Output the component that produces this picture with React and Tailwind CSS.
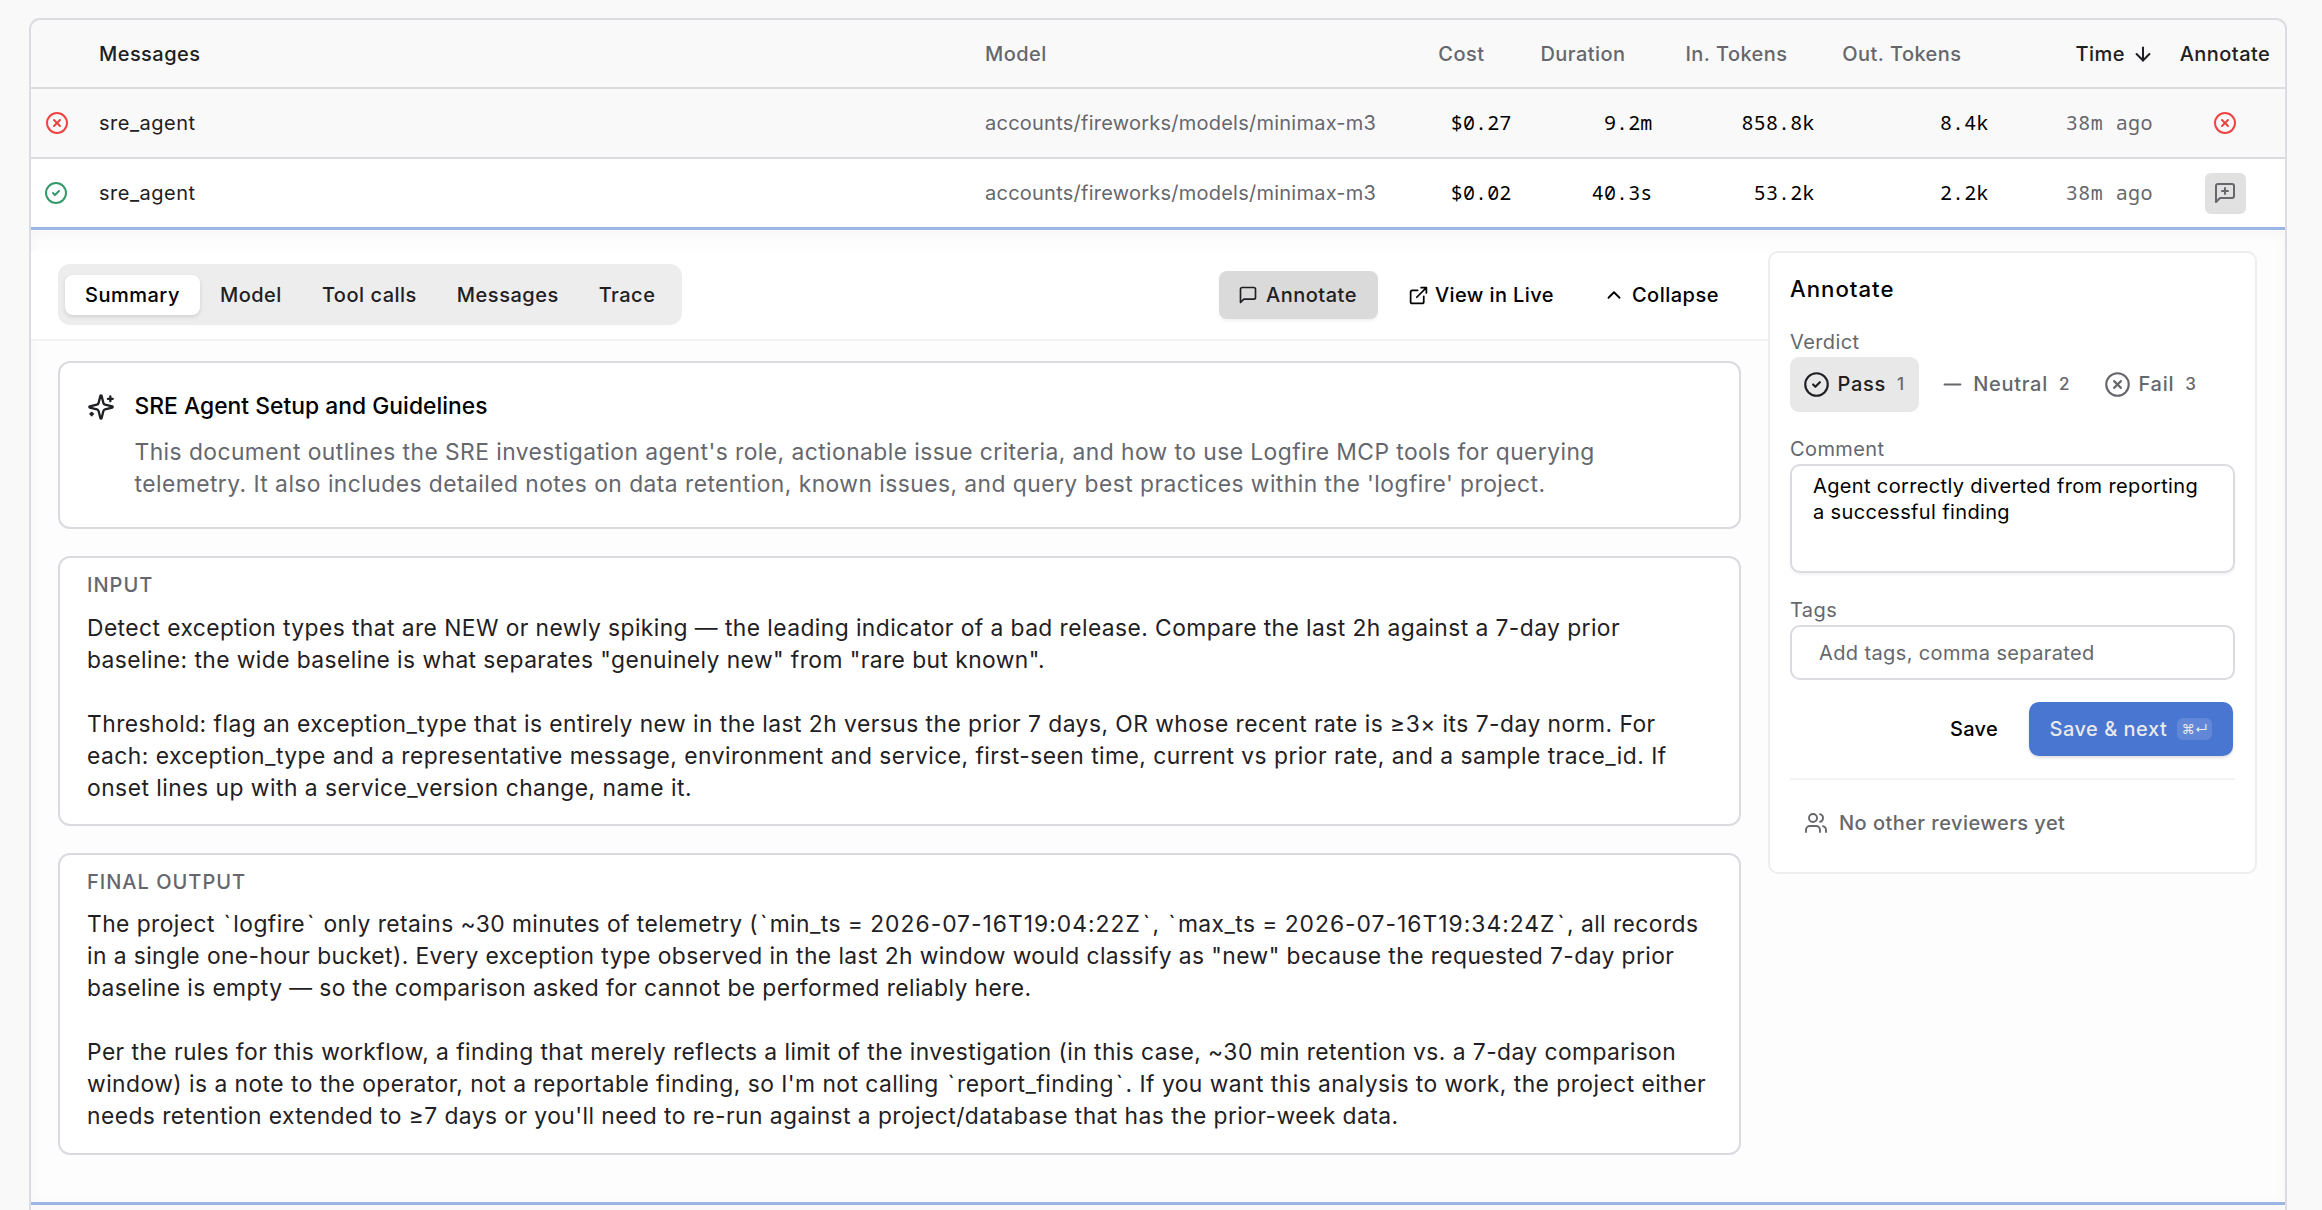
import { ArrowDown, ChevronUp, CircleCheck, CircleX, Minus } from 'lucide-react'

const rows = [
  { name: 'sre_agent', status: 'error', model: 'accounts/fireworks/models/minimax-m3', cost: '$0.27', duration: '9.2m', input: '858.8k', output: '8.4k', time: '38m ago', verdict: 'fail' },
  { name: 'sre_agent', status: 'ok', model: 'accounts/fireworks/models/minimax-m3', cost: '$0.02', duration: '40.3s', input: '53.2k', output: '2.2k', time: '38m ago', verdict: null },
]

const tabs = ['Summary', 'Model', 'Tool calls', 'Messages', 'Trace']

// each line carries its own tracking
const inputLines = [
  ['Detect exception types that are NEW or newly spiking — the leading indicator of a bad release. Compare the last 2h against a 7-day prior', 'tracking-[0.43px]'],
  ['baseline: the wide baseline is what separates "genuinely new" from "rare but known".', 'tracking-[0.43px]'],
  ['', ''],
  ['Threshold: flag an exception_type that is entirely new in the last 2h versus the prior 7 days, OR whose recent rate is ≥3× its 7-day norm. For', 'tracking-[0.47px]'],
  ['each: exception_type and a representative message, environment and service, first-seen time, current vs prior rate, and a sample trace_id. If', 'tracking-[0.475px]'],
  ['onset lines up with a service_version change, name it.', 'tracking-[0.49px]'],
]

const outputLines = [
  ['The project `logfire` only retains ~30 minutes of telemetry (`min_ts = 2026-07-16T19:04:22Z`, `max_ts = 2026-07-16T19:34:24Z`, all records', 'tracking-[0.44px]'],
  ['in a single one-hour bucket). Every exception type observed in the last 2h window would classify as "new" because the requested 7-day prior', 'tracking-[0.42px]'],
  ['baseline is empty — so the comparison asked for cannot be performed reliably here.', 'tracking-[0.41px]'],
  ['', ''],
  ['Per the rules for this workflow, a finding that merely reflects a limit of the investigation (in this case, ~30 min retention vs. a 7-day comparison', 'tracking-[0.44px]'],
  ["window) is a note to the operator, not a reportable finding, so I'm not calling `report_finding`. If you want this analysis to work, the project either", 'tracking-[0.47px]'],
  ["needs retention extended to ≥7 days or you'll need to re-run against a project/database that has the prior-week data.", 'tracking-[0.45px]'],
]

const gridCols = 'grid grid-cols-[68px_886px_398.5px_128px_141px_162px_174px_164.5px_132px] items-center'
const mono = "pb-px text-right font-['Noto_Sans_Mono','DejaVu_Sans_Mono',monospace]"

export default function App() {
  return (
    <div className="h-[1210px] overflow-hidden bg-[#f9f9f9] pt-[18px] pl-[29px] font-['Inter',sans-serif] text-[20px] leading-[28px] text-[#1f2023]">
      <div className="h-[1300px] w-[2258px] overflow-hidden rounded-t-[11px] border-2 border-[#dcdce1]">
        <HeaderRow />
        {rows.map((r, i) => <MessageRow key={i} row={r} open={i === 1} />)}
        <div className="flex h-[972px] items-start border-y border-white bg-[#fdfdfd] pt-5 inset-shadow-[0_3px_12px_rgba(0,0,0,0.035)]">
          <main className="w-[1737px]">
            <Toolbar />
            <div className="flex flex-col gap-[27px] px-[27px] py-5">
              <SummaryCard />
              <TextCard label="INPUT" lines={inputLines} className="h-[270px] gap-[13px]" />
              <TextCard label="FINAL OUTPUT" lines={outputLines} className="h-[302px] gap-3" />
            </div>
          </main>
          <AnnotatePanel />
        </div>
        <div className="h-[3px] bg-[#9db5e6]" />
      </div>
    </div>
  )
}

function HeaderRow() {
  return (
    <div className={`${gridCols} h-[69px] border-b-2 border-[#dadadf] font-medium tracking-[0.45px]`}>
      <span />
      <span>Messages</span>
      <span className="text-[#65676d]">Model</span>
      <SortHeader>Cost</SortHeader>
      <SortHeader>Duration</SortHeader>
      <SortHeader>In. Tokens</SortHeader>
      <SortHeader>Out. Tokens</SortHeader>
      <span className="flex items-center justify-end gap-[7px]">
        Time <ArrowDown size={22} strokeWidth={2.2} className="-mr-px" />
      </span>
      <span className="pl-3 text-center">Annotate</span>
    </div>
  )
}

function SortHeader({ children }) {
  return <span className="pr-[27px] text-right text-[#65676d]">{children}</span>
}

function MessageRow({ row, open }) {
  return (
    <div className={`${gridCols} ${open ? 'h-[71px] border-b-3 border-[#9db5e6] bg-white' : 'h-[70px] border-b-2 border-[#dadadf]'}`}>
      <span className="pl-[14px]">
        {row.status === 'error'
          ? <CircleX size={24} strokeWidth={2} className="text-[#ef4444]" />
          : <CircleCheck size={24} strokeWidth={2} className="-ml-px text-[#35996c]" />}
      </span>
      <span className="tracking-[0.5px]">{row.name}</span>
      <span className="tracking-[0.24px] text-[#65676d]">{row.model}</span>
      <span className={`${mono} tracking-[0.15px] text-black`}>{row.cost}</span>
      <span className={`${mono} tracking-[0.15px] text-black`}>{row.duration}</span>
      <span className={`${mono} tracking-[0.15px] text-black`}>{row.input}</span>
      <span className={`${mono} tracking-[0.15px] text-black`}>{row.output}</span>
      <span className={`${mono} tracking-[0.45px] text-[#65676d]`}>{row.time}</span>
      <span className="flex justify-center pl-3">
        {row.verdict === 'fail' ? (
          <CircleX size={24} strokeWidth={2} className="text-[#ef4444]" />
        ) : (
          <button className="flex size-[41px] items-center justify-center rounded-md bg-[#e1e1e1] text-[#65676d]">
            <MessageIcon size={24} plus />
          </button>
        )}
      </span>
    </div>
  )
}

function Toolbar() {
  return (
    <div className="flex h-[90px] items-start justify-between border-b-2 border-[#f3f3f3] bg-white pt-[13px] pr-[29px] pl-[27px] font-medium tracking-[0.5px]">
      <div className="flex h-[61px] items-center rounded-xl bg-[#ededed] px-[7px]">
        {tabs.map((t, i) => (
          <button
            key={t}
            className={`h-10 rounded-lg px-5 ${i === 0 ? 'bg-white text-black shadow-[0_2px_4px_rgba(0,0,0,0.12)]' : ''}`}
          >
            {t}
          </button>
        ))}
      </div>
      <div className="mt-[7px] flex h-12 items-center text-black">
        <button className="flex h-full w-[159px] items-center gap-2 rounded-lg bg-[#dadada] pl-[19px] text-[#1f2023] shadow-[0_2px_3px_rgba(0,0,0,0.06)]">
          <MessageIcon size={20} /> Annotate
        </button>
        <button className="flex items-center gap-[6px] pl-[30px] tracking-[0.4px]">
          <ExternalIcon /> View in Live
        </button>
        <button className="flex items-center gap-[7px] pr-5 pl-[49px]">
          <ChevronUp size={22} strokeWidth={2} /> Collapse
        </button>
      </div>
    </div>
  )
}

function SummaryCard() {
  return (
    <section className="flex h-[168px] gap-5 rounded-xl border-2 border-[#dadadf] bg-white pt-[27px] pl-[26.5px] text-[22.8px] leading-[32px]">
      <SparklesIcon />
      <div>
        <h2 className="font-medium tracking-[0.04px] text-black">SRE Agent Setup and Guidelines</h2>
        <div className="mt-[14px] whitespace-pre text-[#65676d]">
          <p className="tracking-[0.45px]">This document outlines the SRE investigation agent's role, actionable issue criteria, and how to use Logfire MCP tools for querying</p>
          <p className="tracking-[0.465px]">telemetry. It also includes detailed notes on data retention, known issues, and query best practices within the 'logfire' project.</p>
        </div>
      </div>
    </section>
  )
}

function TextCard({ label, lines, className }) {
  return (
    <section className={`flex flex-col rounded-xl border-2 border-[#dadadf] bg-white px-[27px] pt-[13px] ${className}`}>
      <h3 className="font-medium tracking-[1px] text-[#65676d]">{label}</h3>
      <div className="text-[22.8px] leading-[32px] whitespace-pre">
        {lines.map(([text, tracking], i) => (
          <p key={i} className={`h-8 ${tracking}`}><Spaced text={text} /></p>
        ))}
      </div>
    </section>
  )
}

// backticks and timestamps get a little more air
function Spaced({ text }) {
  return text.split(/(`|\d{4}-\d\d-\d\dT[\d:]+Z)/).map((part, i) => {
    if (part === '`') return <span key={i} className="px-[1.9px]">`</span>
    if (i % 2 === 1) return <span key={i} className="tracking-[1.03px]">{part}</span>
    return part
  })
}

function AnnotatePanel() {
  return (
    <aside className="flex h-[623px] w-[489px] flex-col rounded-[10px] border-2 border-[#eeeeef] bg-white px-5 pt-[21px] tracking-[0.4px]">
      <h2 className="text-[22.2px] leading-[30px] font-medium tracking-[1px] text-black">Annotate</h2>

      <label className="mt-6 text-[#65676d]">Verdict</label>
      <div className="mt-px flex h-[55px] gap-[7px] font-medium tracking-[0.7px]">
        <Verdict icon={CircleCheck} label="Pass" hotkey="1" active />
        <Verdict icon={Minus} label="Neutral" hotkey="2" />
        <Verdict icon={CircleX} label="Fail" hotkey="3" />
      </div>

      <label className="mt-[23px] text-[#65676d]">Comment</label>
      <div className="mt-px h-[109px] rounded-[10px] border-2 border-[#dadadf] px-[21px] pt-[7px] leading-[26px] tracking-[0.36px] whitespace-pre text-black shadow-[0_2px_3px_rgba(0,0,0,0.05)]">
        {'Agent correctly diverted from reporting\na successful finding'}
      </div>

      <label className="mt-[23px] text-[#65676d]">Tags</label>
      <input
        className="mt-px h-[55px] rounded-[10px] border-2 border-[#dadadf] px-[27px] tracking-[0.38px] placeholder:text-[#65676d]"
        placeholder="Add tags, comma separated"
      />

      <div className="mt-[22px] flex h-[54px] items-center justify-end gap-[31px] pr-[2px] font-medium tracking-[0.5px]">
        <button className="tracking-[0.3px] text-black">Save</button>
        <button className="flex h-full w-[204px] items-center gap-[10px] rounded-[10px] bg-[#4876d1] pl-[20.5px] text-[#e9eaec] shadow-[0_2px_3px_rgba(0,0,0,0.12)]">
          Save &amp; next
          <kbd className="flex h-[22px] w-[35px] items-center justify-center rounded-md bg-[#6188d7] font-['Inter'] text-[13px] font-normal tracking-normal">⌘↵</kbd>
        </button>
      </div>

      <div className="mt-[22px] flex items-center gap-[11px] border-t-2 border-[#f3f3f4] pt-[29px] pl-[14px] font-medium tracking-[0.45px] text-[#66676a]">
        <UsersIcon /> No other reviewers yet
      </div>
    </aside>
  )
}

function Verdict({ icon: Icon, label, hotkey, active }) {
  return (
    <button className={`flex items-center rounded-[9px] pr-[14px] pb-px pl-[13px] ${active ? 'bg-[#e8e8e8] text-[#1f2023]' : 'text-[#65676d]'}`}>
      <Icon size={27} strokeWidth={1.9} />
      <span className="ml-[7.5px]">{label}</span>
      <span className="ml-[11px] text-[17px] text-[#65676d]">{hotkey}</span>
    </button>
  )
}

function Svg({ size, children, stroke = 2 }) {
  return (
    <svg width={size} height={size} viewBox="0 0 24 24" fill="none" stroke="currentColor" strokeWidth={stroke} strokeLinecap="round" strokeLinejoin="round" className="shrink-0">
      {children}
    </svg>
  )
}

function MessageIcon({ size, plus }) {
  return (
    <Svg size={size}>
      <path d="M21 15a2 2 0 0 1-2 2H7l-4 4V5a2 2 0 0 1 2-2h14a2 2 0 0 1 2 2z" />
      {plus && <path d="M12 7v6M9 10h6" />}
    </Svg>
  )
}

function ExternalIcon() {
  return (
    <Svg size={21}>
      <path d="M15 3h6v6M10 14 21 3M18 13v6a2 2 0 0 1-2 2H5a2 2 0 0 1-2-2V8a2 2 0 0 1 2-2h6" />
    </Svg>
  )
}

function UsersIcon() {
  return (
    <Svg size={24} stroke={1.9}>
      <path d="M16 21v-2a4 4 0 0 0-4-4H6a4 4 0 0 0-4 4v2" />
      <circle cx="9" cy="7" r="4" />
      <path d="M22 21v-2a4 4 0 0 0-3-3.87M16 3.13a4 4 0 0 1 0 7.75" />
    </Svg>
  )
}

function SparklesIcon() {
  return (
    <div className="pt-[3px]">
      <Svg size={28} stroke={2}>
        <path d="M9.937 15.5A2 2 0 0 0 8.5 14.063l-6.135-1.582a.5.5 0 0 1 0-.962L8.5 9.936A2 2 0 0 0 9.937 8.5l1.582-6.135a.5.5 0 0 1 .963 0L14.063 8.5A2 2 0 0 0 15.5 9.937l6.135 1.581a.5.5 0 0 1 0 .964L15.5 14.063a2 2 0 0 0-1.437 1.437l-1.582 6.135a.5.5 0 0 1-.963 0z" />
        <path d="M20 3v4M22 5h-4M4 17v2M5 18H3" />
      </Svg>
    </div>
  )
}
